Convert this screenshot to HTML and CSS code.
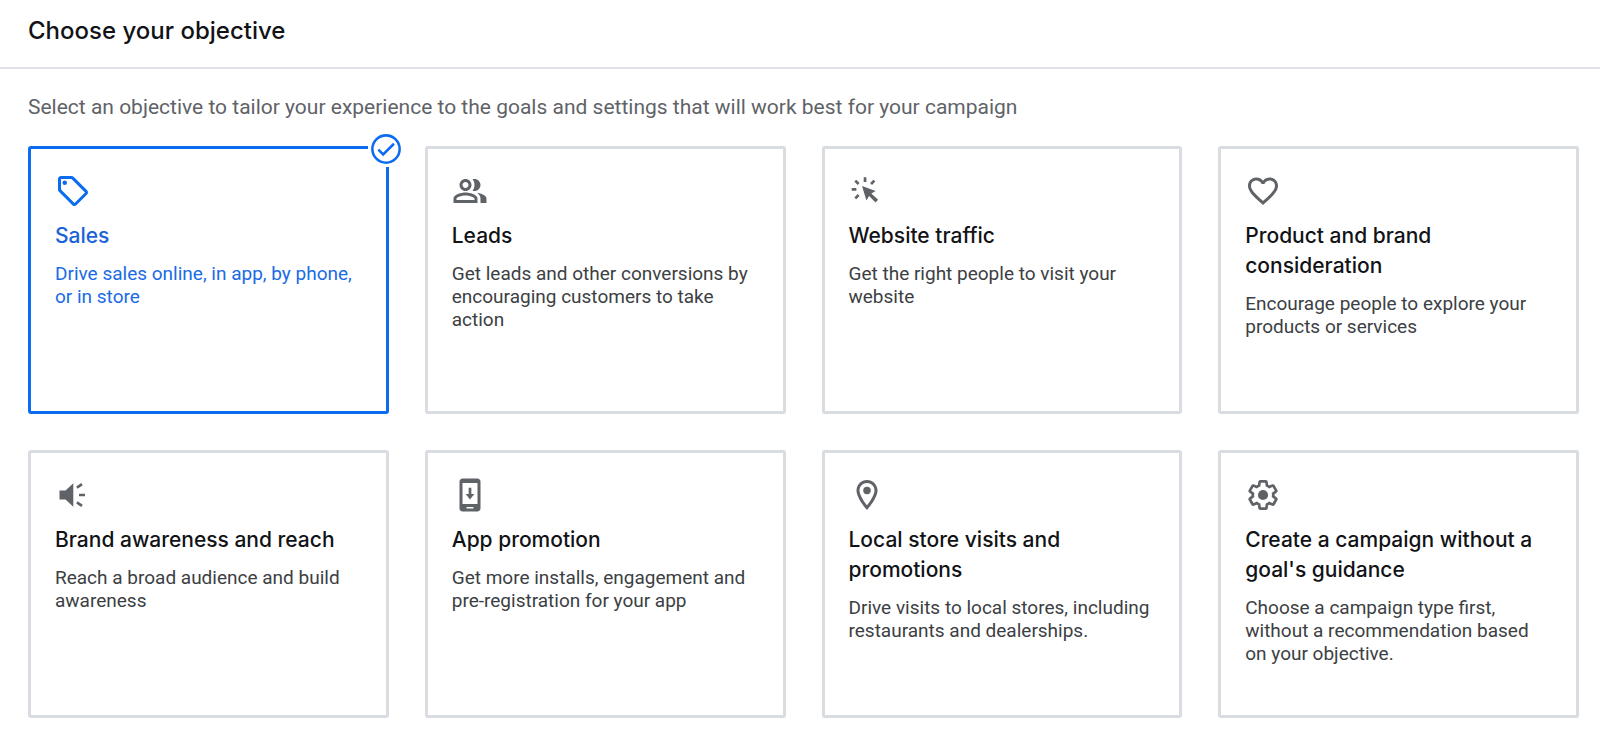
FILE: index.html
```html
<!DOCTYPE html>
<html lang="en">
<head>
    <meta charset="UTF-8">
    <meta name="viewport" content="width=device-width, initial-scale=1.0">
    <title>Choose your objective</title>
    <link rel="stylesheet" href="styles.css">
</head>
<body>

    <header class="header">
        <h1>Choose your objective</h1>
    </header>

    <main class="content">
        <p class="intro" id="intro">Select an objective to tailor your experience to the goals and settings that will work best for your campaign</p>

        <div class="objectives" role="radiogroup" aria-labelledby="intro">

            <label class="objective">
                <input type="radio" name="objective" value="sales" checked>
                <span class="card">
                    <svg class="icon" viewBox="0 0 24 24"><path d="M21.41 11.58l-9-9C12.05 2.22 11.55 2 11 2H4c-1.1 0-2 .9-2 2v7c0 .55.22 1.05.59 1.42l9 9c.36.36.86.58 1.41.58s1.05-.22 1.41-.59l7-7c.37-.36.59-.86.59-1.41s-.23-1.06-.59-1.42zM13 20.01L4 11V4h7v-.01l9 9-7 7.02z"/><circle cx="6.5" cy="6.5" r="1.5"/></svg>
                    <span class="title">Sales</span>
                    <span class="description">Drive sales online, in app, by phone, or in store</span>
                    <svg class="check" viewBox="0 0 24 24"><circle cx="12" cy="12" r="9.1"/><path d="M6.9 12.4l3.2 3.2 7.2-7.1"/></svg>
                </span>
            </label>

            <label class="objective">
                <input type="radio" name="objective" value="leads">
                <span class="card">
                    <svg class="icon" viewBox="0 0 24 24"><path d="M16.67 13.13C18.04 14.06 19 15.32 19 17v3h4v-3c0-2.18-3.57-3.47-6.33-3.87zM15 12c2.21 0 4-1.79 4-4s-1.79-4-4-4c-.47 0-.91.1-1.33.24C14.5 5.27 15 6.58 15 8s-.5 2.73-1.33 3.76c.42.14.86.24 1.33.24zM9 12c2.21 0 4-1.79 4-4s-1.79-4-4-4-4 1.79-4 4 1.79 4 4 4zm0-6c1.1 0 2 .9 2 2s-.9 2-2 2-2-.9-2-2 .9-2 2-2zm0 7c-2.67 0-8 1.34-8 4v3h16v-3c0-2.66-5.33-4-8-4zm6 5H3v-.99C3.2 16.29 6.3 15 9 15s5.8 1.29 6 2v1z"/></svg>
                    <span class="title">Leads</span>
                    <span class="description">Get leads and other conversions by encouraging customers to take action</span>
                </span>
            </label>

            <label class="objective">
                <input type="radio" name="objective" value="traffic">
                <span class="card">
                    <svg class="icon" viewBox="0 0 24 24"><path d="M8.7 8.7l9.1 3.3-2.9 1.7 4.5 4.2-1.7 1.7-4.3-4.3-1.8 3z"/><path class="rays" d="M10.7 2.9V6M1.8 10.9h3.1M4.2 5.1l2.2 2.2M16.9 5.1l-2.2 2.2M6.4 14.7l-2.2 2.2"/></svg>
                    <span class="title">Website traffic</span>
                    <span class="description">Get the right people to visit your website</span>
                </span>
            </label>

            <label class="objective">
                <input type="radio" name="objective" value="consideration">
                <span class="card">
                    <svg class="icon" viewBox="0 0 24 24"><path d="M16.5 3c-1.74 0-3.41.81-4.5 2.09C10.91 3.81 9.24 3 7.5 3 4.42 3 2 5.42 2 8.5c0 3.78 3.4 6.86 8.55 11.54L12 21.35l1.45-1.32C18.6 15.36 22 12.28 22 8.5 22 5.42 19.58 3 16.5 3zm-4.4 15.55l-.1.1-.1-.1C7.14 14.24 4 11.39 4 8.5 4 6.5 5.5 5 7.5 5c1.54 0 3.04.99 3.57 2.36h1.87C13.46 5.99 14.96 5 16.5 5c2 0 3.5 1.5 3.5 3.5 0 2.89-3.14 5.74-7.9 10.05z"/></svg>
                    <span class="title">Product and brand consideration</span>
                    <span class="description">Encourage people to explore your products or services</span>
                </span>
            </label>

            <label class="objective">
                <input type="radio" name="objective" value="awareness">
                <span class="card">
                    <svg class="icon" viewBox="0 0 24 24"><path d="M3 9v6h4l5.2 4.8V4.2L7 9z"/><path class="rays" d="M14.6 7.1l3.4-2.3M16 12h4M14.6 16.9l3.4 2.3"/></svg>
                    <span class="title">Brand awareness and reach</span>
                    <span class="description">Reach a broad audience and build awareness</span>
                </span>
            </label>

            <label class="objective">
                <input type="radio" name="objective" value="app">
                <span class="card">
                    <svg class="icon" viewBox="0 0 24 24"><path fill-rule="evenodd" d="M7 1h10c1.1 0 2 .9 2 2v18c0 1.1-.9 2-2 2H7c-1.1 0-2-.9-2-2V3c0-1.1.9-2 2-2zm0 3v14h10V4zm2.7 16v1h4.6v-1z"/><path d="M11.1 7.2h1.8v4.1h2L12 15l-2.9-3.7h2z"/></svg>
                    <span class="title">App promotion</span>
                    <span class="description">Get more installs, engagement and pre-registration for your app</span>
                </span>
            </label>

            <label class="objective">
                <input type="radio" name="objective" value="local">
                <span class="card">
                    <svg class="icon" viewBox="0 0 24 24"><path d="M12 2C8.13 2 5 5.13 5 9c0 5.25 7 13 7 13s7-7.75 7-13c0-3.87-3.13-7-7-7zM7 9c0-2.76 2.24-5 5-5s5 2.24 5 5c0 2.88-2.88 7.19-5 9.88C9.92 16.21 7 11.85 7 9z"/><circle cx="12" cy="9" r="2.5"/></svg>
                    <span class="title">Local store visits and promotions</span>
                    <span class="description">Drive visits to local stores, including restaurants and dealerships.</span>
                </span>
            </label>

            <label class="objective">
                <input type="radio" name="objective" value="none">
                <span class="card">
                    <svg class="icon" viewBox="0 0 24 24"><path class="gear" transform="translate(1.1 1.1) scale(.91)" d="M19.43 12.98c.04-.32.07-.64.07-.98 0-.34-.03-.66-.07-.98l2.11-1.65c.19-.15.24-.42.12-.64l-2-3.46c-.09-.16-.26-.25-.44-.25-.06 0-.12.01-.17.03l-2.49 1c-.52-.4-1.08-.73-1.69-.98l-.38-2.65C14.46 2.18 14.25 2 14 2h-4c-.25 0-.46.18-.49.42l-.38 2.65c-.61.25-1.17.59-1.69.98l-2.49-1c-.06-.02-.12-.03-.18-.03-.17 0-.34.09-.43.25l-2 3.46c-.13.22-.07.49.12.64l2.11 1.65c-.04.32-.07.65-.07.98 0 .33.03.66.07.98l-2.11 1.65c-.19.15-.24.42-.12.64l2 3.46c.09.16.26.25.44.25.06 0 .12-.01.17-.03l2.49-1c.52.4 1.08.73 1.69.98l.38 2.65c.03.24.24.42.49.42h4c.25 0 .46-.18.49-.42l.38-2.65c.61-.25 1.17-.59 1.69-.98l2.49 1c.06.02.12.03.18.03.17 0 .34-.09.43-.25l2-3.46c.12-.22.07-.49-.12-.64l-2.11-1.65z"/><circle cx="12" cy="12" r="3.4"/></svg>
                    <span class="title">Create a campaign without a goal's guidance</span>
                    <span class="description">Choose a campaign type first, without a recommendation based on your objective.</span>
                </span>
            </label>

        </div>
    </main>

</body>
</html>
```
FILE: styles.css
```css
* {
    box-sizing: border-box;
}

body {
    margin: 0;
    font-family: Roboto, Arial, sans-serif;
    color: #3c4043;
    background-color: #fff;
}

.header {
    padding: 16px 28px 21px;
    border-bottom: 2px solid #dfe1e8;
}

.header h1 {
    margin: 0;
    font-family: Inter, Roboto, sans-serif;
    font-size: 24px;
    font-weight: 500;
    line-height: 30px;
    color: #111316;
}

.content {
    padding: 26px 21px 32px 28px;
}

.intro {
    margin: 0 0 27px;
    font-size: 21px;
    line-height: 24px;
    color: #5f6368;
}

.objectives {
    display: grid;
    grid-template-columns: repeat(4, 1fr);
    gap: 36px;
}

.objective {
    position: relative;
    display: flex;
    cursor: pointer;
}

/* The card itself shows the state of the radio */
.objective input {
    position: absolute;
    opacity: 0;
}

.card {
    position: relative;
    display: flex;
    flex-direction: column;
    width: 100%;
    min-height: 268px;
    padding: 24px;
    border: 3px solid #d9dde2;
    border-radius: 3px;
}

.icon {
    width: 36px;
    height: 36px;
    margin-bottom: 12px;
    fill: #5f6368;
}

.rays {
    fill: none;
    stroke: #5f6368;
    stroke-width: 1.8;
}

.gear {
    fill: none;
    stroke: #5f6368;
    stroke-width: 2;
}

.title {
    margin-bottom: 11px;
    font-family: Inter, Roboto, sans-serif;
    font-size: 21px;
    font-weight: 500;
    line-height: 30px;
    color: #111316;
}

.description {
    font-size: 19px;
    line-height: 23px;
}

.check {
    display: none;
    position: absolute;
    top: -18px;
    right: -18px;
    width: 36px;
    height: 36px;
    fill: none;
    stroke-width: 1.7;
    background-color: #fff;
}

/* Selected objective */
.objective input:checked + .card {
    border-color: #0b6cf0;
    color: #1a6be6;
}

input:checked + .card .title {
    color: #1a63d8;
}

input:checked + .card .icon {
    fill: #0b6cf0;
}

input:checked + .card .check {
    display: block;
    stroke: #0b6cf0;
}
```
